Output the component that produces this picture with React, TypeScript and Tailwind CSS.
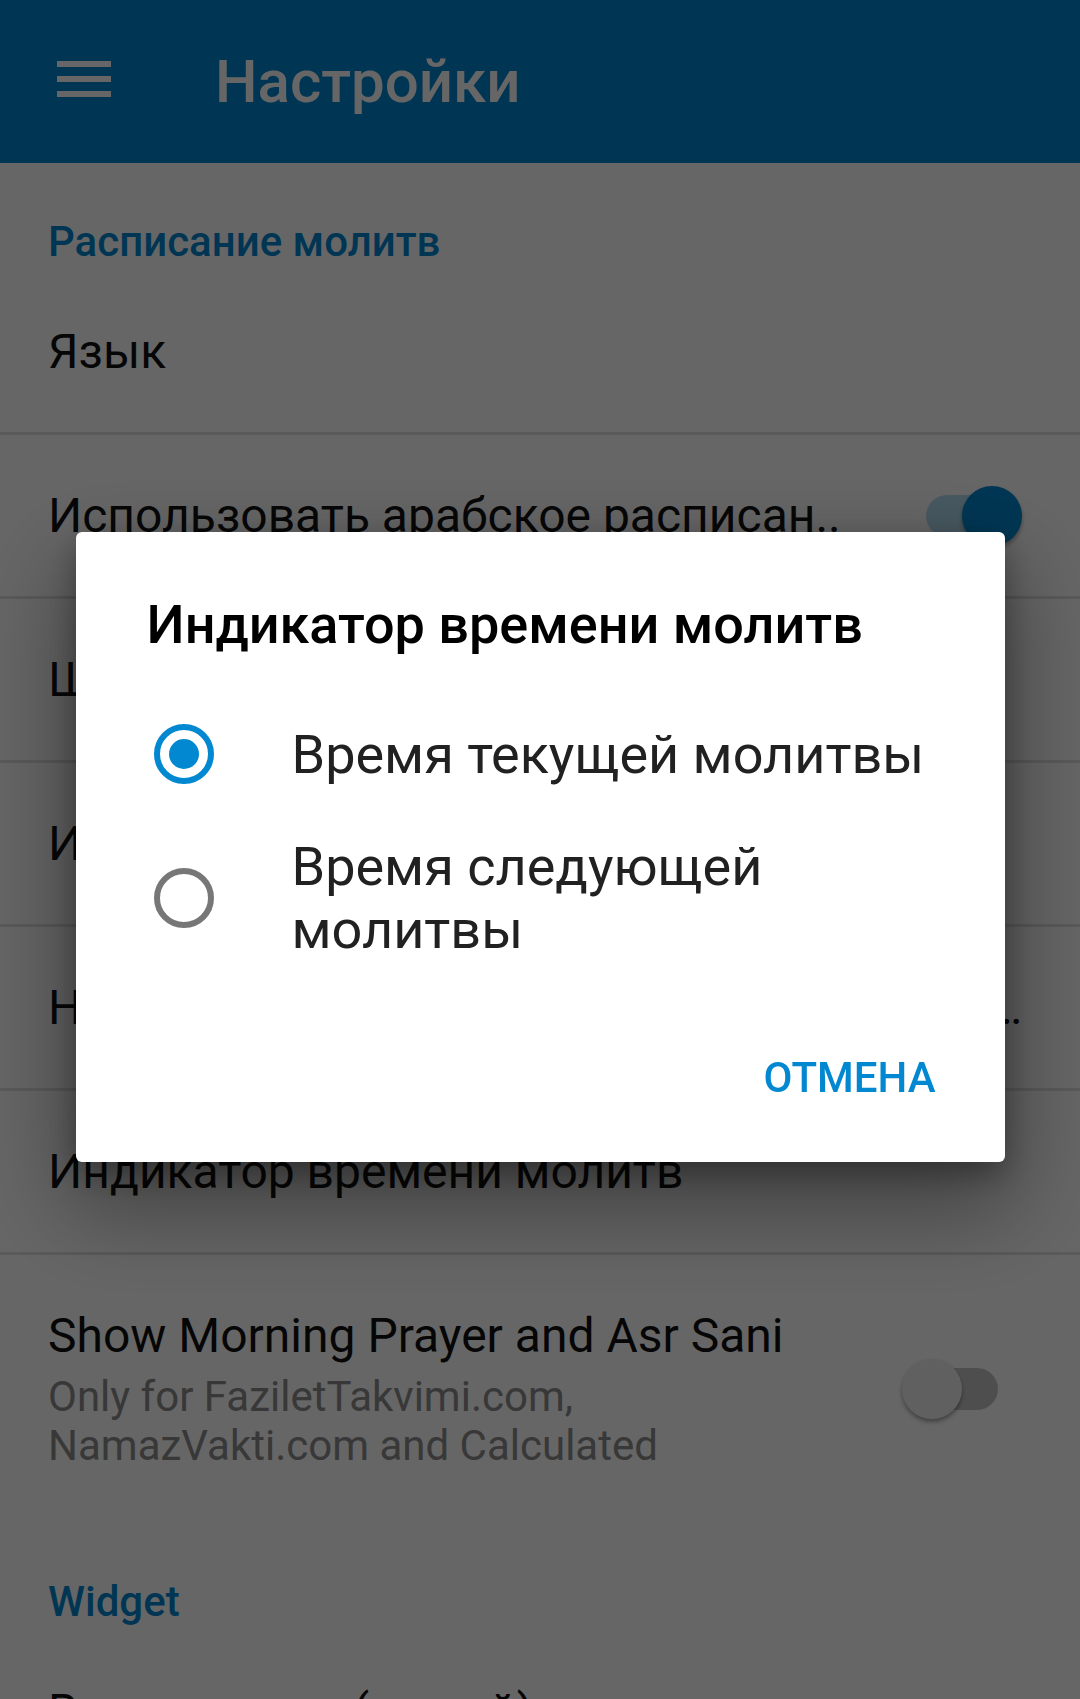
const font = "font-['Roboto','Noto_Sans',sans-serif]";

const Switch = ({ on }: { on: boolean }) => (
  <div className="relative w-[120px] h-[62px] flex items-center shrink-0">
    <div
      className={
        on
          ? 'ml-[24px] w-[72px] h-[42px] rounded-full bg-[#b3ddf2]'
          : 'ml-[24px] w-[72px] h-[42px] rounded-full bg-[#c4c4c4]'
      }
    />
    <div
      className={
        on
          ? 'absolute left-[60px] top-[1px] w-[60px] h-[60px] rounded-full bg-[#0288d1] shadow-[0_3px_4px_rgba(0,0,0,0.35)]'
          : 'absolute left-0 top-[1px] w-[60px] h-[60px] rounded-full bg-[#f1f1f1] shadow-[0_3px_4px_rgba(0,0,0,0.35)]'
      }
    />
  </div>
);

const Category = ({ title }: { title: string }) => (
  <div className="h-[108px] pt-[49px] pl-[48px]">
    <div className="text-[42px] leading-[60px] font-medium text-[#0288d1]">{title}</div>
  </div>
);

const Row = ({ title, toggle, clipped }: { title: string; toggle?: boolean; clipped?: boolean }) => (
  <div className="h-[164px] border-b-[3px] border-[#e0e0e0] flex items-center pl-[48px] pr-[58px]">
    {clipped ? (
      <div className="flex-1 min-w-0 flex text-[48px] leading-[56px] text-[#111]">
        <span className="flex-1 min-w-0 overflow-hidden whitespace-nowrap">{title}</span>
        <span>…</span>
      </div>
    ) : (
      <div className="flex-1 min-w-0 truncate text-[48px] leading-[56px] text-[#111]">{title}</div>
    )}
    {toggle !== undefined && <Switch on={toggle} />}
  </div>
);

const Radio = ({ checked }: { checked: boolean }) =>
  checked ? (
    <span className="w-[60px] h-[60px] rounded-full border-[6px] border-[#0288d1] flex items-center justify-center shrink-0">
      <span className="w-[30px] h-[30px] rounded-full bg-[#0288d1]" />
    </span>
  ) : (
    <span className="w-[60px] h-[60px] rounded-full border-[6px] border-[#777777] shrink-0" />
  );

const options = [
  { label: 'Время текущей молитвы', checked: true },
  { label: 'Время следующей молитвы', checked: false },
];

export default function App() {
  return (
    <div className={`${font} relative h-[1699px] overflow-hidden bg-white`}>
      <header className="h-[163px] bg-[#0288d1] flex items-center">
        <div className="ml-[57px] mb-[5px] w-[54px] flex flex-col gap-[9px]">
          <span className="h-[6px] bg-white" />
          <span className="h-[6px] bg-white" />
          <span className="h-[6px] bg-white" />
        </div>
        <h1 className="ml-[104px] text-[60px] leading-[60px] font-medium text-white">Настройки</h1>
      </header>

      <main>
        <Category title="Расписание молитв" />
        <Row title="Язык" />
        <Row title="Использовать арабское расписан.." toggle={true} />
        <Row title="Шрифт" />
        <Row title="Исламский календарь" />
        <Row title="Настройки уведомлений для каждой молитвы и напоминаний" clipped />
        <Row title="Индикатор времени молитв" />

        <div className="h-[268px] flex items-center pl-[48px] pr-[58px]">
          <div className="flex-1 pr-[48px]">
            <div className="text-[48px] leading-[56px] text-[#111]">Show Morning Prayer and Asr Sani</div>
            <div className="mt-[8px] text-[42px] leading-[49px] text-[#8c8c8c]">
              Only for FaziletTakvimi.com, NamazVakti.com and Calculated
            </div>
          </div>
          <Switch on={false} />
        </div>

        <Category title="Widget" />
        <Row title="Вид виджета (новый)" />
      </main>

      {/* dialog */}
      <div className="fixed inset-0 bg-black/60 flex items-center justify-center">
        <div className="mb-[5px] w-[929px] bg-white rounded-[6px] shadow-[0_40px_90px_12px_rgba(0,0,0,0.35),0_12px_30px_rgba(0,0,0,0.3)]">
          <h2 className="pt-[62px] pl-[71px] text-[54px] leading-[62px] font-medium text-black">
            Индикатор времени молитв
          </h2>
          <div className="mt-[26px]">
            {options.map((o) => (
              <div key={o.label} className="min-h-[144px] flex items-center gap-[78px] pl-[78px] pr-[48px]">
                <Radio checked={o.checked} />
                <span className="text-[54px] leading-[63px] text-[#212121]">{o.label}</span>
              </div>
            ))}
          </div>
          <div className="flex justify-end pt-[83px] pb-[60px] pr-[69px]">
            <button className="text-[42px] leading-[49px] font-medium text-[#0288d1] uppercase">Отмена</button>
          </div>
        </div>
      </div>
    </div>
  );
}
